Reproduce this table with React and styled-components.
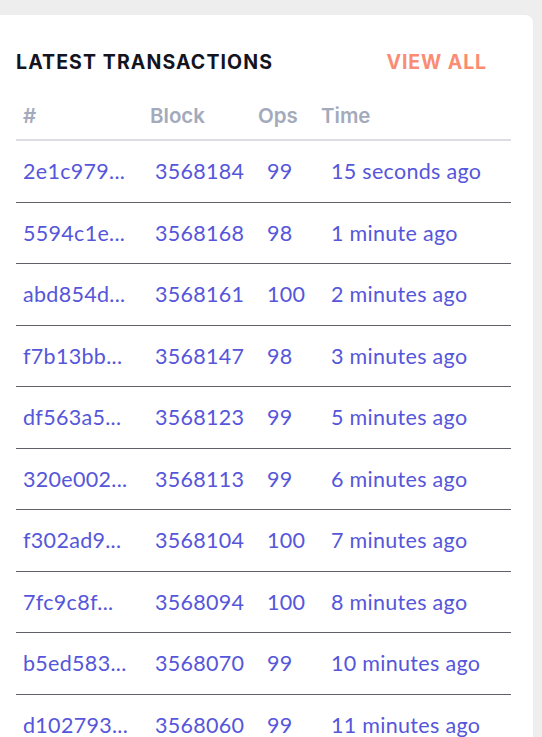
import React from 'react';
import styled, {createGlobalStyle} from 'styled-components';

const Global = createGlobalStyle`
  html, body { margin: 0; padding: 0; background: #eeeeee; }
  body { overflow: hidden; }
`

const Page = styled.main`
  padding: 15px 9px 0 0;
  height: 737px;
  box-sizing: border-box;
`

const Card = styled.section`
  background: #fff;
  border-radius: 0 8px 0 0;
  padding: 35px 22px 0 16px;
  height: 100%;
  box-sizing: border-box;
`

const Head = styled.div`
  display: flex;
  justify-content: space-between;
  align-items: center;
  height: 24px;
`

const Title = styled.h2`
  margin: 0;
  font-family: 'Inter', 'Noto Sans', sans-serif;
  font-weight: 700;
  font-size: 19.5px;
  letter-spacing: 1.1px;
  color: #14141f;
`

const ViewAll = styled.a`
  font-family: 'Inter', 'Noto Sans', sans-serif;
  font-weight: 700;
  font-size: 19.5px;
  letter-spacing: 0.9px;
  color: #fa8c74;
  margin-right: 24px;
  cursor: pointer;
`

const Cols = styled.div`
  display: grid;
  grid-template-columns: ${p => p.$cols};
  align-items: center;
  padding-left: 7px;
  box-sizing: border-box;
`

const HeadRow = styled(Cols)`
  padding-top: 29px;
  padding-bottom: 10px;
  line-height: 26px;
  border-bottom: 2px solid #dcdde0;
  font-family: 'Inter', 'Noto Sans', sans-serif;
  font-weight: 600;
  font-size: 20.5px;
  color: #a3aabb;
`

const Row = styled(Cols)`
  height: 61.5px;
  border-bottom: 1px solid #5f6068;
  font-family: 'Lato', 'Noto Sans', sans-serif;
  font-size: 21.5px;
  letter-spacing: 0.3px;
  color: #5656da;
`

const Cell = styled.span`
  white-space: nowrap;
`

const txs = [
  ['2e1c979...', '3568184', '99', '15 seconds ago'],
  ['5594c1e...', '3568168', '98', '1 minute ago'],
  ['abd854d...', '3568161', '100', '2 minutes ago'],
  ['f7b13bb...', '3568147', '98', '3 minutes ago'],
  ['df563a5...', '3568123', '99', '5 minutes ago'],
  ['320e002...', '3568113', '99', '6 minutes ago'],
  ['f302ad9...', '3568104', '100', '7 minutes ago'],
  ['7fc9c8f...', '3568094', '100', '8 minutes ago'],
  ['b5ed583...', '3568070', '99', '10 minutes ago'],
  ['d102793...', '3568060', '99', '11 minutes ago'],
]

export default function App() {
  return (
    <Page>
      <Global />
      <Card>
        <Head>
          <Title>LATEST TRANSACTIONS</Title>
          <ViewAll>VIEW ALL</ViewAll>
        </Head>
        <HeadRow $cols="127px 108px 63px 1fr">
          <Cell>#</Cell>
          <Cell>Block</Cell>
          <Cell>Ops</Cell>
          <Cell>Time</Cell>
        </HeadRow>
        {txs.map(t => (
          <Row key={t[0]} $cols="132px 112px 64px 1fr">
            {t.map((v, i) => <Cell key={i}>{v}</Cell>)}
          </Row>
        ))}
      </Card>
    </Page>
  );
}
